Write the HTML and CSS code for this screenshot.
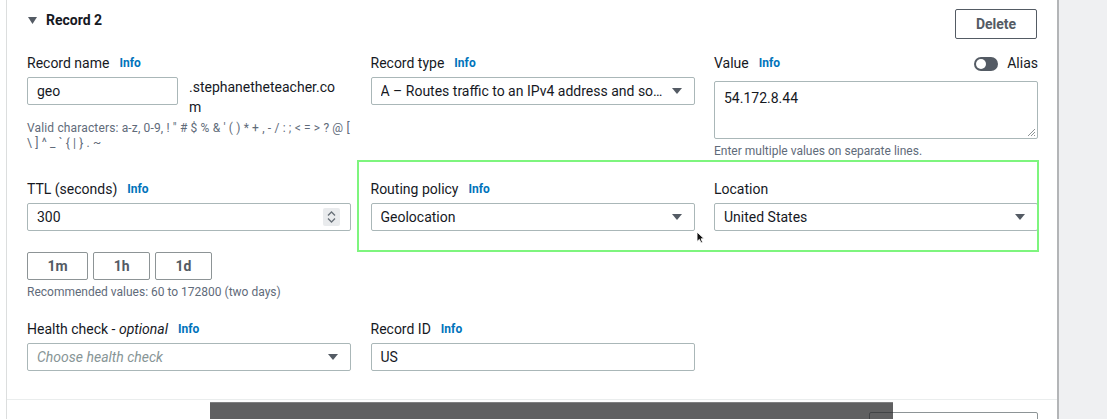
FILE: index.html
```html
<!DOCTYPE html>
<html lang="en">
<head>
<meta charset="utf-8">
<title>Record 2</title>
<link rel="stylesheet" href="styles.css">
</head>
<body>
<div class="page">
  <div class="panel">
    <section class="record">
      <div class="record-head">
        <div class="title">
          <svg class="expand" width="9" height="7" viewBox="0 0 9 7"><path d="M0 0H9L4.5 7Z" fill="#545b64"/></svg>
          <span>Record 2</span>
        </div>
        <button class="btn delete">Delete</button>
      </div>

      <div class="row row1">
        <div class="field">
          <div class="label"><span>Record name</span><a class="info">Info</a></div>
          <div class="name-line">
            <div class="input name-input">geo</div>
            <div class="suffix">.stephanetheteacher.com</div>
          </div>
          <div class="help help-name">Valid characters: a-z, 0-9, ! " # $ % &amp; ' ( ) * + , - / : ; &lt; = &gt; ? @ [ <span class="nowrap">\ ] ^ _ ` { | } . ~</span></div>
        </div>
        <div class="field">
          <div class="label"><span>Record type</span><a class="info">Info</a></div>
          <div class="input select">
            <span class="sel-text">A – Routes traffic to an IPv4 address and some AWS resources</span>
            <svg class="caret" width="10" height="6" viewBox="0 0 10 6"><path d="M0 0H10L5 6Z" fill="#545b64"/></svg>
          </div>
        </div>
        <div class="field">
          <div class="label-row">
            <div class="label"><span>Value</span><a class="info">Info</a></div>
            <div class="alias"><span class="toggle"><span class="knob"></span></span><span>Alias</span></div>
          </div>
          <div class="textarea"><span>54.172.8.44</span>
            <svg class="grip" width="9" height="9" viewBox="0 0 9 9"><path d="M8 1L1 8M8 4L4 8M8 7L7 8" stroke="#8d9496" stroke-width="1"/></svg>
          </div>
          <div class="help help-value">Enter multiple values on separate lines.</div>
        </div>
      </div>

      <div class="row row2">
        <div class="field">
          <div class="label"><span>TTL (seconds)</span><a class="info">Info</a></div>
          <div class="input number">
            <span>300</span>
            <span class="spinner">
              <svg width="11" height="14" viewBox="0 0 11 14"><path d="M2 5.5L5.5 2L9 5.5M2 8.5L5.5 12L9 8.5" fill="none" stroke="#687078" stroke-width="1.3"/></svg>
            </span>
          </div>
          <div class="quick">
            <button class="btn small">1m</button>
            <button class="btn small">1h</button>
            <button class="btn small">1d</button>
          </div>
          <div class="help help-ttl">Recommended values: 60 to 172800 (two days)</div>
        </div>
        <div class="field">
          <div class="label"><span>Routing policy</span><a class="info">Info</a></div>
          <div class="input select">
            <span class="sel-text">Geolocation</span>
            <svg class="caret" width="10" height="6" viewBox="0 0 10 6"><path d="M0 0H10L5 6Z" fill="#545b64"/></svg>
          </div>
        </div>
        <div class="field">
          <div class="label"><span>Location</span></div>
          <div class="input select">
            <span class="sel-text">United States</span>
            <svg class="caret" width="10" height="6" viewBox="0 0 10 6"><path d="M0 0H10L5 6Z" fill="#545b64"/></svg>
          </div>
        </div>
      </div>

      <div class="row row3">
        <div class="field">
          <div class="label"><span>Health check - <em>optional</em></span><a class="info">Info</a></div>
          <div class="input select">
            <span class="sel-text placeholder">Choose health check</span>
            <svg class="caret" width="10" height="6" viewBox="0 0 10 6"><path d="M0 0H10L5 6Z" fill="#545b64"/></svg>
          </div>
        </div>
        <div class="field">
          <div class="label"><span>Record ID</span><a class="info">Info</a></div>
          <div class="input">US</div>
        </div>
        <div class="field"></div>
      </div>
    </section>
    <div class="footer">
      <button class="btn add"></button>
    </div>
  </div>
  <div class="gutter"></div>

  <div class="highlight"></div>
  <svg class="cursor" width="9" height="13" viewBox="0 0 9 13"><path d="M1 1V10.5L3.4 8.4L5 12L6.6 11.3L5.1 7.8H8.2Z" fill="#111" stroke="#fff" stroke-width="0.9"/></svg>
  <div class="caption"></div>
</div>
</body>
</html>
```

FILE: styles.css
```css
* { box-sizing: border-box; }

body {
  margin: 0;
  height: 419px;
  overflow: hidden;
  background: #ffffff;
  font-family: Roboto, "Noto Sans", Arial, sans-serif;
  font-size: 14px;
  color: #16191f;
}

.page {
  position: relative;
  display: flex;
  height: 419px;
  overflow: hidden;
}

.panel {
  width: 1053px;
  margin-left: 6px;
  border-left: 1px solid #dcdede;
  border-right: 2px solid #b3b5b7;
  background: #ffffff;
  flex: none;
}

.gutter {
  flex: 1;
  background: #eff0f2;
}

.record {
  padding: 9px 19px 28px 20px;
  border-bottom: 1px solid #eaeded;
}

.record-head {
  display: flex;
  justify-content: space-between;
  align-items: flex-start;
  height: 30px;
}

.title {
  display: flex;
  align-items: center;
  margin-top: 1px;
  height: 20px;
  font-weight: 700;
  font-size: 14px;
  line-height: 20px;
}

.expand {
  margin-left: 1px;
  margin-right: 9px;
}

.btn {
  font-family: inherit;
  background: #ffffff;
  border: 1px solid #545b64;
  border-radius: 2px;
  color: #545b64;
  font-weight: 700;
  font-size: 14px;
  cursor: pointer;
}

.delete {
  width: 82px;
  height: 30px;
  margin-right: 1px;
}

.row {
  display: grid;
  grid-template-columns: repeat(3, 1fr);
  column-gap: 19.5px;
  align-items: start;
}

.row1 { margin-top: 14px; }
.row2 { margin-top: 20px; }
.row3 { margin-top: 19px; }

.field {
  display: flex;
  flex-direction: column;
  min-width: 0;
}

.label {
  display: flex;
  align-items: center;
  height: 20px;
  line-height: 20px;
  margin-bottom: 4px;
  white-space: nowrap;
}

.label em {
  font-style: italic;
}

.info {
  margin-left: 10px;
  font-size: 12px;
  font-weight: 700;
  color: #0073bb;
}

.label-row {
  display: flex;
  justify-content: space-between;
  align-items: flex-start;
  height: 24px;
  margin-bottom: 4px;
}

.label-row .label {
  margin-bottom: 0;
}

.alias {
  display: flex;
  align-items: flex-start;
  line-height: 20px;
}

.toggle {
  position: relative;
  width: 24px;
  height: 14px;
  margin-top: 4px;
  margin-right: 9px;
  border-radius: 7px;
  background: #545b64;
}

.knob {
  position: absolute;
  left: 2px;
  top: 2px;
  width: 10px;
  height: 10px;
  border-radius: 50%;
  background: #ffffff;
}

.input {
  display: flex;
  align-items: center;
  height: 28px;
  padding: 0 9px;
  border: 1px solid #aab7b8;
  border-radius: 2px;
  background: #ffffff;
  line-height: 26px;
}

.name-line {
  display: flex;
  align-items: flex-start;
}

.name-input {
  width: 151px;
  flex: none;
}

.suffix {
  width: 150px;
  margin-left: 11px;
  line-height: 20px;
  word-break: break-all;
}

.select {
  justify-content: space-between;
  padding-right: 12px;
}

.sel-text {
  flex: 1;
  min-width: 0;
  overflow: hidden;
  white-space: nowrap;
  text-overflow: ellipsis;
  margin-right: 5px;
}

.placeholder {
  font-style: italic;
  color: #879596;
}

.caret {
  flex: none;
}

.textarea {
  position: relative;
  height: 58px;
  padding: 6px 9px;
  border: 1px solid #aab7b8;
  border-radius: 2px;
  line-height: 20px;
}

.grip {
  position: absolute;
  right: 1px;
  bottom: 1px;
}

.help {
  font-size: 12px;
  line-height: 15px;
  color: #5f6b7a;
}

.nowrap { white-space: nowrap; }

.help-name { margin-top: 4px; letter-spacing: 0.15px; }
.help-value { margin-top: 5px; }
.help-ttl { margin-top: 5px; }

.number {
  justify-content: space-between;
  padding-right: 10px;
}

.spinner {
  display: flex;
  align-items: center;
  justify-content: center;
  width: 17px;
  height: 18px;
  border-radius: 2px;
  background: #e9ebed;
}

.quick {
  display: flex;
  gap: 5px;
  margin-top: 21px;
}

.small {
  height: 28px;
  padding: 0 19.5px;
  border-color: #8d9496;
  color: #545b64;
}

.footer {
  display: flex;
  justify-content: flex-end;
  padding: 12px 19px 0 0;
}

.add {
  width: 169px;
  height: 30px;
  border-color: #8d9496;
}

.highlight {
  position: absolute;
  left: 357px;
  top: 160px;
  width: 682px;
  height: 92px;
  border: 2px solid #7ef57e;
  pointer-events: none;
}

.cursor {
  position: absolute;
  left: 696px;
  top: 231px;
}

.caption {
  position: absolute;
  left: 210px;
  top: 402px;
  width: 683px;
  height: 30px;
  background: rgba(40, 41, 42, 0.74);
  border-top: 1px solid rgba(150, 150, 150, 0.6);
}
```
